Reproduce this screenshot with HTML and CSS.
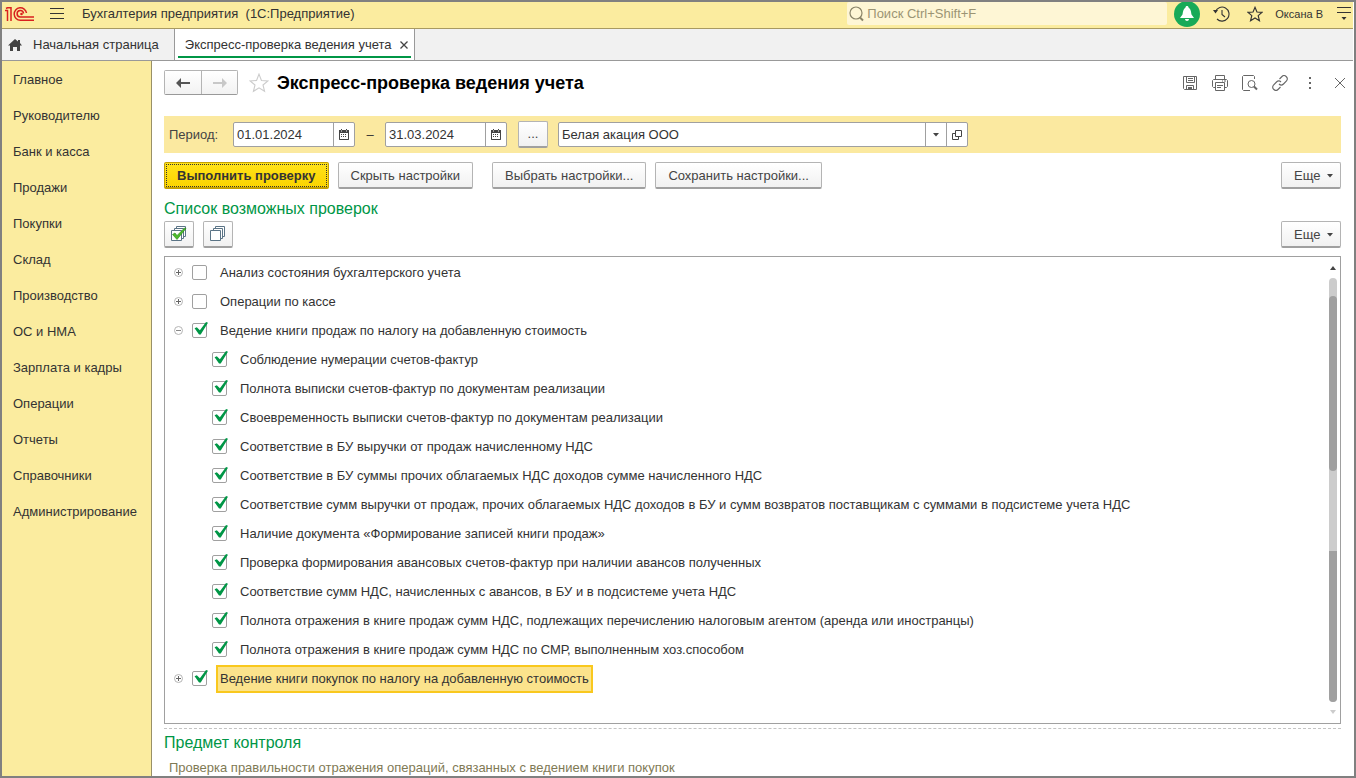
FILE: index.html
```html
<!DOCTYPE html>
<html lang="ru">
<head>
<meta charset="utf-8">
<title>Экспресс-проверка ведения учета</title>
<link rel="stylesheet" href="styles.css">
</head>
<body>
<svg class="defs" width="0" height="0" aria-hidden="true">
  <symbol id="i-cal" viewBox="0 0 10 11"><path fill="#444" fill-rule="evenodd" d="M0 1h2V0h1v1h4V0h1v1h2v9.500l-.5.500h-9l-.5-.5zM1 4v6h8V4zM2 1.500v1h1v-1zM7 1.500v1h1v-1z"/><path stroke="#444" stroke-dasharray="1 1" d="M2 5.500h6M2 7.500h6"/></symbol>
  <symbol id="i-down" viewBox="0 0 6 4"><path fill="#444" d="M0 0h6L3 3.500z"/></symbol>
  <symbol id="i-plus" viewBox="0 0 9 9"><circle cx="4.500" cy="4.500" r="4" fill="#fff" stroke="#b4b4b4"/><path stroke="#666" d="M2 4.500h5M4.500 2v5"/></symbol>
  <symbol id="i-minus" viewBox="0 0 9 9"><circle cx="4.500" cy="4.500" r="4" fill="#fff" stroke="#b4b4b4"/><path stroke="#888" d="M2 4.500h5"/></symbol>
</svg>
<header class="topbar">
  <svg class="logo" width="30" height="16" viewBox="0 0 30 16" aria-label="1С"><g fill="none" stroke="#d9201f" stroke-width="1.500"><path d="M0 4.500h2.500V15M1 2.500 2.500 1.800H6V15"/><path d="M21.500 7A6.200 6.200 0 1 0 15.300 14.200H29"/><path d="M18.500 7.500A3.200 3.200 0 1 0 15.300 11H29"/></g><circle cx="16.500" cy="8" r="1.300" fill="#d9201f"/></svg>
  <button class="icon-btn burger" aria-label="Меню"><svg width="14" height="12" viewBox="0 0 14 12"><path stroke="#333" d="M0 .5h14M0 5.500h14M0 10.500h14"/></svg></button>
  <div class="app-name">Бухгалтерия предприятия&nbsp; (1С:Предприятие)</div>
  <label class="search">
    <svg width="16" height="16" viewBox="0 0 16 16"><g fill="none" stroke="#8a8468" stroke-width="1.200"><circle cx="7" cy="7" r="6"/><path stroke-width="2" d="m11 11.500 3 3"/></g></svg>
    <input type="text" placeholder="Поиск Ctrl+Shift+F" aria-label="Поиск">
  </label>
  <button class="bell" aria-label="Уведомления"><svg width="16" height="16" viewBox="0 0 16 16"><path fill="#fff" d="M8 0c1 0 1.500.6 1.500 1.500C12 3 12 6 12.500 8.500L15 12H1l2.500-3.500C4 6 4 3 6.500 1.500 6.500.6 7 0 8 0zM6 13h4c0 1.300-1 2-2 2s-2-.7-2-2z"/></svg></button>
  <button class="icon-btn history" aria-label="История"><svg width="17" height="16" viewBox="0 0 17 16"><g fill="none" stroke="#333" stroke-width="1.100"><path d="M2.500 5.500A7 7 0 1 1 4 13"/><path d="M9 4v4.500l3 2.500"/></g><path fill="#333" d="M0 4h5L2.500 7.500z"/></svg></button>
  <button class="icon-btn fav" aria-label="Избранное"><svg width="16" height="16" viewBox="0 0 18 18"><path fill="none" stroke="#333" stroke-width="1.300" d="m9 1.500 2.200 5.200 5.800.4-4.400 3.700 1.400 5.700L9 13.400l-5 3.100 1.400-5.700L1 7.100l5.800-.4z"/></svg></button>
  <a class="user" href="#">Оксана В</a>
  <button class="icon-btn" aria-label="Настройки"><svg width="14" height="13" viewBox="0 0 14 13"><path stroke="#333" d="M0 .5h14M0 5.500h14"/><path fill="#333" d="M4.500 10h5L7 13z"/></svg></button>
</header>
<nav class="tabs">
  <a class="tab home" href="#"><svg width="14" height="12" viewBox="0 0 14 12"><path fill="#444" d="m7 0 3 2.500V1h2v3l2 2.500h-2V12H9V8H5v4H2V6.500H0z"/></svg>Начальная страница</a>
  <div class="tab active"><div class="active-inner"><a href="#">Экспресс-проверка ведения учета</a><button class="icon-btn" aria-label="Закрыть вкладку"><svg width="8" height="8" viewBox="0 0 8 8"><path stroke="#444" stroke-width="1.300" d="m.5.500 7 7m0-7-7 7"/></svg></button></div></div>
</nav>
<div class="workspace">
  <nav class="sidebar">
    <a href="#">Главное</a><a href="#">Руководителю</a><a href="#">Банк и касса</a><a href="#">Продажи</a><a href="#">Покупки</a><a href="#">Склад</a><a href="#">Производство</a><a href="#">ОС и НМА</a><a href="#">Зарплата и кадры</a><a href="#">Операции</a><a href="#">Отчеты</a><a href="#">Справочники</a><a href="#">Администрирование</a>
  </nav>
  <main class="content">
    <div class="title-row">
      <div class="nav-group">
        <button class="nav-btn" aria-label="Назад"><svg width="14" height="10" viewBox="0 0 14 10"><path fill="#555" d="M0 5 5 0v4h9v2H5v4z"/></svg></button><button class="nav-btn off" aria-label="Вперед"><svg width="14" height="10" viewBox="0 0 14 10"><path fill="#c8c8c8" d="M14 5 9 0v4H0v2h9v4z"/></svg></button>
      </div>
      <button class="icon-btn star" aria-label="В избранное"><svg width="20" height="20" viewBox="0 0 18 18"><path fill="none" stroke="#ccc" d="m9 1 2.200 5.700 5.800.4-4.400 3.700 1.400 5.700L9 13.400l-5 3.100 1.400-5.700L1 7.100l5.800-.4z"/></svg></button>
      <h1>Экспресс-проверка ведения учета</h1>
      <div class="tools">
        <button class="icon-btn" aria-label="Сохранить"><svg width="16" height="16" viewBox="0 0 16 16"><g fill="none" stroke="#666"><path d="M1.500 1.500h13v13h-12l-1-1zM4.500 1.500v6h8v-6M6 3.500h5M6 5.500h5M4.500 14.500v-4h7v4"/></g><path fill="#666" d="M6 12h4v2H6z"/></svg></button>
        <button class="icon-btn" aria-label="Печать"><svg width="16" height="16" viewBox="0 0 16 16"><g fill="none" stroke="#666"><path d="M3.500 4V.5h9V4M3.500 12.500h-2l-1-1v-6l1-1h13l1 1v6l-1 1h-2M3.500 7.500h9v8h-9zM5 10.500h6M5 12.500h4M10 6h1m1 0h2"/></g></svg></button>
        <button class="icon-btn" aria-label="Просмотр"><svg width="16" height="16" viewBox="0 0 16 16"><g fill="none" stroke="#666"><path d="M8 15.500H1.500l-1-1v-13l1-1h10l1 1V4"/><circle cx="9.500" cy="9" r="3.500"/><path stroke-width="2" d="m12 11.500 3 3"/></g></svg></button>
        <button class="icon-btn" aria-label="Ссылка"><svg width="16" height="16" viewBox="0 0 16 16"><g fill="none" stroke="#666" stroke-width="1.100"><path d="m7.500 4 2.500-2.500c2.500-2.500 7 1 4.500 4.500l-3 3C10 10.500 8 10 7 9M8.500 12 6 14.500C3.500 17-1 13.500 1.500 10l3-3C6 5.500 8 6 9 7"/></g></svg></button>
        <button class="icon-btn" aria-label="Еще"><svg width="4" height="12" viewBox="0 0 4 12"><path fill="#666" d="M1 0h2v2H1zM1 5h2v2H1zM1 10h2v2H1z"/></svg></button>
        <button class="icon-btn" aria-label="Закрыть"><svg width="10" height="10" viewBox="0 0 10 10"><path stroke="#666" d="m0 0 10 10M10 0 0 10"/></svg></button>
      </div>
    </div>
    <div class="period">
      <label class="period-label" for="from">Период:</label>
      <div class="field date"><input id="from" type="text" value="01.01.2024"><button aria-label="Выбрать дату начала"><svg width="10" height="11"><use href="#i-cal"/></svg></button></div>
      <span class="dash">–</span>
      <div class="field date"><input type="text" value="31.03.2024" aria-label="Конец периода"><button aria-label="Выбрать дату окончания"><svg width="10" height="11"><use href="#i-cal"/></svg></button></div>
      <button class="btn square pick">...</button>
      <div class="field org"><input type="text" value="Белая акация ООО" aria-label="Организация"><button aria-label="Выбрать из списка"><svg width="6" height="4"><use href="#i-down"/></svg></button><button aria-label="Открыть"><svg width="10" height="10" viewBox="0 0 10 10"><path fill="none" stroke="#444" d="M3.500.5h6v6h-6zM3 3.500H.5v6h6V7"/></svg></button></div>
    </div>
    <div class="commands">
      <button class="btn primary">Выполнить проверку</button>
      <button class="btn">Скрыть настройки</button>
      <button class="btn second-group">Выбрать настройки...</button>
      <button class="btn">Сохранить настройки...</button>
      <button class="btn more">Еще<svg width="6" height="4"><use href="#i-down"/></svg></button>
    </div>
    <h2>Список возможных проверок</h2>
    <div class="list-tools">
      <button class="btn square" aria-label="Установить флажки"><svg width="16" height="16" viewBox="0 0 16 16"><g fill="#fff" stroke="#5b7486"><path d="M5.500.5h9v10h-9z"/><path d="M3.500 2.500h9v10h-9z"/><path d="M.5 4.500h10v10H.5z"/></g><path fill="#4cbb2c" stroke="#27851a" stroke-width=".6" d="m1.500 8.500 2.500-1.500 2 2.500L13.500 2l1.500.5L6 13.500z"/></svg></button>
      <button class="btn square" aria-label="Снять флажки"><svg width="16" height="16" viewBox="0 0 16 16"><g fill="#fff" stroke="#5b7486"><path d="M5.500.5h9v10h-9z"/><path d="M3.500 2.500h9v10h-9z"/><path d="M.5 4.500h10v10H.5z"/></g></svg></button>
      <button class="btn more">Еще<svg width="6" height="4"><use href="#i-down"/></svg></button>
    </div>
    <div class="tree">
      <ul>
        <li><button class="exp" aria-label="Развернуть"><svg width="9" height="9"><use href="#i-plus"/></svg></button><label><input type="checkbox"><span>Анализ состояния бухгалтерского учета</span></label></li>
        <li><button class="exp" aria-label="Развернуть"><svg width="9" height="9"><use href="#i-plus"/></svg></button><label><input type="checkbox"><span>Операции по кассе</span></label></li>
        <li><button class="exp" aria-label="Свернуть"><svg width="9" height="9"><use href="#i-minus"/></svg></button><label><input type="checkbox" checked><span>Ведение книги продаж по налогу на добавленную стоимость</span></label></li>
        <li class="child"><label><input type="checkbox" checked><span>Соблюдение нумерации счетов-фактур</span></label></li>
        <li class="child"><label><input type="checkbox" checked><span>Полнота выписки счетов-фактур по документам реализации</span></label></li>
        <li class="child"><label><input type="checkbox" checked><span>Своевременность выписки счетов-фактур по документам реализации</span></label></li>
        <li class="child"><label><input type="checkbox" checked><span>Соответствие в БУ выручки от продаж начисленному НДС</span></label></li>
        <li class="child"><label><input type="checkbox" checked><span>Соответствие в БУ суммы прочих облагаемых НДС доходов сумме начисленного НДС</span></label></li>
        <li class="child"><label><input type="checkbox" checked><span>Соответствие сумм выручки от продаж, прочих облагаемых НДС доходов в БУ и сумм возвратов поставщикам с суммами в подсистеме учета НДС</span></label></li>
        <li class="child"><label><input type="checkbox" checked><span>Наличие документа «Формирование записей книги продаж»</span></label></li>
        <li class="child"><label><input type="checkbox" checked><span>Проверка формирования авансовых счетов-фактур при наличии авансов полученных</span></label></li>
        <li class="child"><label><input type="checkbox" checked><span>Соответствие сумм НДС, начисленных с авансов, в БУ и в подсистеме учета НДС</span></label></li>
        <li class="child"><label><input type="checkbox" checked><span>Полнота отражения в книге продаж сумм НДС, подлежащих перечислению налоговым агентом (аренда или иностранцы)</span></label></li>
        <li class="child"><label><input type="checkbox" checked><span>Полнота отражения в книге продаж сумм НДС по СМР, выполненным хоз.способом</span></label></li>
        <li><button class="exp" aria-label="Развернуть"><svg width="9" height="9"><use href="#i-plus"/></svg></button><label><input type="checkbox" checked><span class="selected">Ведение книги покупок по налогу на добавленную стоимость</span></label></li>
      </ul>
      <div class="scroll">
        <svg width="6" height="4" viewBox="0 0 6 4"><path fill="#444" d="M0 4h6L3 0z"/></svg>
        <div class="track"><i class="thumb"></i><i class="gap"></i><i class="rest"></i></div>
        <svg width="6" height="4" viewBox="0 0 6 4"><path fill="#ccc" d="M0 0h6L3 4z"/></svg>
      </div>
    </div>
    <section class="subject">
      <h2>Предмет контроля</h2>
      <p>Проверка правильности отражения операций, связанных с ведением книги покупок</p>
    </section>
  </main>
</div>
</body>
</html>
```
FILE: styles.css
```css
* { box-sizing: border-box; }
body {
  margin: 0;
  min-height: 100vh;
  display: flex;
  flex-direction: column;
  border: 2px solid #808080;
  background: #fff;
  color: #333;
  font: 13px/16px "Liberation Sans", Arial, sans-serif;
}
button, input { font: inherit; color: inherit; margin: 0; }
button { padding: 0; border: 0; background: none; }
a { color: inherit; text-decoration: none; }
svg { display: block; flex: none; }
.defs { position: absolute; }
.icon-btn { display: flex; align-items: center; justify-content: center; flex: none; }

.topbar {
  display: flex;
  align-items: center;
  height: 27px;
  margin-right: 1px;
  padding: 0 2px 3px 3px;
  background: #fbec9f;
  border-bottom: 1px solid #a89a62;
}
.burger { margin: 0 18px 0 15px; }
.app-name { flex: 1; white-space: nowrap; }
.search {
  display: flex;
  align-items: center;
  gap: 2px;
  width: 320px;
  height: 23px;
  padding-left: 2px;
  background: #fef6d5;
  border-radius: 2px;
}
.search input { flex: 1; min-width: 0; padding: 0; border: 0; outline: 0; background: none; }
.search input::placeholder { color: #9b9474; opacity: 1; }
.bell {
  display: flex;
  align-items: center;
  justify-content: center;
  width: 26px;
  height: 26px;
  margin: 0 13px 0 7px;
  border-radius: 50%;
  background: #18aa58;
}
.history { margin-right: 17px; }
.user { margin: 0 14px 0 12px; font-size: 11px; white-space: nowrap; }

.tabs {
  display: flex;
  height: 32px;
  margin-right: 1px;
  background: #f1f1f1;
  border-bottom: 1px solid #999;
}
.tab { display: flex; border-right: 1px solid #999; white-space: nowrap; }
.home { align-items: center; gap: 11px; padding: 1px 15px 0 6px; }
.active { padding: 0 3px 2px; background: #fff; }
.active-inner {
  display: flex;
  align-items: center;
  gap: 8px;
  padding: 4px 3px 0 7px;
  border-bottom: 2px solid #009646;
}

.workspace { flex: 1; display: flex; }
.sidebar { flex: none; width: 150px; padding-top: 1px; background: #fbec9f; border-right: 1px solid #999067; }
.sidebar a { display: block; padding: 0 11px; height: 36px; line-height: 36px; }

.content { flex: 1; min-width: 0; display: flex; flex-direction: column; padding: 9px 13px 0 12px; }
.title-row { display: flex; align-items: center; height: 25px; }
.nav-group { display: flex; border: 1px solid #b4b4b4; border-bottom-color: #999; border-radius: 2px; }
.nav-btn { display: flex; align-items: center; justify-content: center; width: 36px; height: 23px; background: linear-gradient(#fff, #f2f2f2); }
.nav-btn.off { border-left: 1px solid #b4b4b4; }
.star { margin: 0 8px 0 11px; }
h1 { flex: 1; margin: 0; color: #000; font-size: 18px; line-height: 24px; font-weight: bold; }
.tools { display: flex; align-items: center; gap: 14px; margin-right: -7px; }
.tools .icon-btn { width: 16px; height: 16px; }

.period { display: flex; align-items: center; height: 37px; margin-top: 21px; padding-left: 5px; background: #fbe9a0; }
.period-label { width: 64px; color: #444; }
.field { display: flex; height: 25px; border: 1px solid #a0a0a0; border-radius: 2px; background: #fff; color: #333; }
.field input { flex: 1; min-width: 0; padding: 1px 3px 0; border: 0; outline: 0; background: none; }
.field button { display: flex; align-items: center; justify-content: center; width: 21px; border-left: 1px solid #a0a0a0; }
.date { width: 122px; }
.dash { width: 30px; text-align: center; }
.org { width: 410px; }
.pick { margin: 0 10px 0 11px; }

.btn {
  height: 27px;
  padding: 2px 12px 0;
  border: 1px solid #b4b4b4;
  border-bottom: 2px solid #a0a0a0;
  border-radius: 2px;
  background: linear-gradient(#fff, #f1f1f1);
  color: #444;
  white-space: nowrap;
}
.square { display: flex; align-items: center; justify-content: center; width: 30px; padding: 0; }
.more { display: flex; align-items: center; gap: 7px; margin-left: auto; padding: 1px 6px 0 12px; width: 60px; }
.primary {
  border-color: #c4a000;
  background: linear-gradient(#ffe31a, #fbd400);
  color: #333;
  font-weight: bold;
  outline: 1px dotted #333;
  outline-offset: -3px;
}
.commands, .list-tools { display: flex; gap: 9px; }
.commands { margin-top: 9px; }
.commands .second-group { margin-left: 10px; }
h2 { margin: 0; color: #009646; font-size: 16px; line-height: 20px; font-weight: normal; }
.commands + h2 { margin-top: 10px; }
.list-tools { margin-top: 2px; }

.tree { flex: 1; display: flex; margin-top: 8px; border: 1px solid #a0a0a0; }
.tree ul { flex: 1; margin: 0; padding: 1px 0 0 9px; list-style: none; }
.tree li { display: flex; align-items: center; height: 29px; }
.tree li.child { padding-left: 38px; }
.tree label { display: flex; align-items: center; }
.exp { width: 18px; }
.tree input {
  appearance: none;
  width: 15px;
  height: 15px;
  border: 1px solid #a0a0a0;
  border-radius: 2px;
  background: #fff;
  position: relative;
}
.tree input:checked::after {
  content: "";
  position: absolute;
  left: 1px;
  top: -2px;
  width: 14px;
  height: 13px;
  background: #009646;
  clip-path: polygon(4% 48%, 20% 40%, 42% 64%, 86% 0, 100% 6%, 48% 96%, 36% 96%);
}
.tree span { margin-left: 9px; padding: 4px 2px; border: 2px solid transparent; white-space: nowrap; }
.tree span.selected { border-color: #f9c81e; background: #fbe38c; }
.scroll { display: flex; flex-direction: column; align-items: center; width: 8px; margin: 9px 3px 9px 0; gap: 8px; }
.track { flex: 1; display: flex; flex-direction: column; width: 8px; border-radius: 4px; background: #ccc; overflow: hidden; }
.thumb { flex: 175; margin-top: 18px; border-radius: 4px; background: #a0a0a0; }
.gap { flex: 81; }
.rest { flex: 151; background: #a0a0a0; }

.subject { margin-top: 4px; padding-top: 4px; border-top: 1px dashed #c4c4c4; }
.subject p { margin: 7px 0 0 5px; color: #7f7a55; }
```
